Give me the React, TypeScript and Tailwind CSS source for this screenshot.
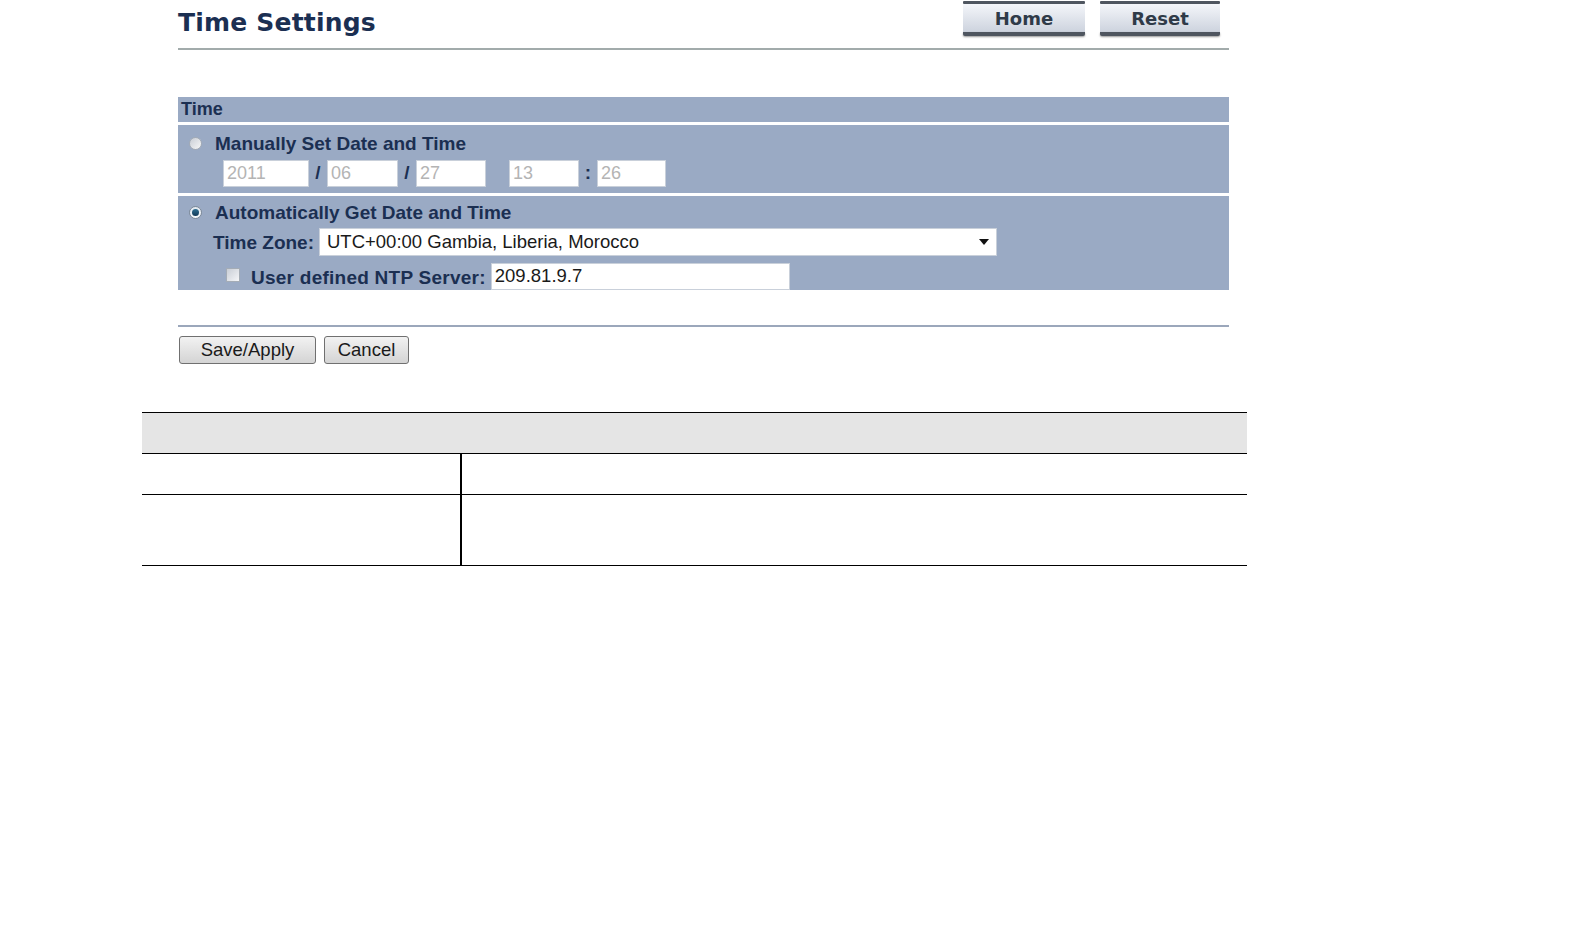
import React from "react";

const navy = "text-[#1b2f52]";

const Field: React.FC<{ value: string; className: string; disabled?: boolean }> = ({ value, className, disabled }) => (
  <div
    className={`h-[27px] bg-white border border-[#c9d0da] flex items-center px-[3px] text-[18px] font-normal leading-none ${
      disabled ? "text-[#b4b4b4]" : "text-[#1a1a1a]"
    } ${className}`}
  >
    {value}
  </div>
);

const TabButton: React.FC<{ label: string; className: string }> = ({ label, className }) => (
  <div className={`flex flex-col h-[36px] ${className}`}>
    <div className="h-[3px] mt-[1px] bg-[#4f5660] rounded-[1px]" />
    <div
      className="flex-1 bg-gradient-to-b from-[#f4f6fa] to-[#cdd3de] flex items-center justify-center text-[18px] text-[#2f3a48]"
      style={{ fontFamily: '"DejaVu Sans", Verdana, sans-serif', fontWeight: 600 }}
    >
      {label}
    </div>
    <div className="h-[4px] bg-[#4f5660] rounded-b-[2px] shadow-[0_1px_2px_rgba(0,0,0,0.4)]" />
  </div>
);

const Radio: React.FC<{ checked?: boolean }> = ({ checked }) => (
  <div
    className={`w-[13px] h-[13px] rounded-full border flex items-center justify-center ${
      checked
        ? "border-[#7d8a99] bg-gradient-to-b from-[#dfe7ef] to-[#f6f9fc]"
        : "border-[#a4acb6] bg-gradient-to-br from-[#c9ced6] to-[#f7f7f7]"
    }`}
  >
    {checked && <div className="w-[7px] h-[7px] rounded-full bg-gradient-to-b from-[#2f6f92] to-[#123a58]" />}
  </div>
);

const OldButton: React.FC<{ label: string; className: string }> = ({ label, className }) => (
  <div
    className={`h-[28px] border border-[#707070] rounded-[3px] bg-gradient-to-b from-[#f2f2f2] to-[#d4d4d4] flex items-center justify-center text-[18.5px] text-[#1a1a1a] ${className}`}
  >
    {label}
  </div>
);

export default function App() {
  return (
    <div className="w-[1584px] h-[932px] bg-white relative" style={{ fontFamily: '"Liberation Sans", Arial, sans-serif' }}>
      {/* header */}
      <div className="ml-[178px] w-[1051px] flex items-start">
        <h1
          className={`mt-[10px] text-[25px] leading-none font-bold ${navy} tracking-[0.2px]`}
          style={{ fontFamily: '"DejaVu Sans", Verdana, sans-serif' }}
        >
          Time Settings
        </h1>
        <div className="ml-auto flex gap-[15px] mr-[9px]">
          <TabButton label="Home" className="w-[122px]" />
          <TabButton label="Reset" className="w-[120px]" />
        </div>
      </div>
      <div className="ml-[178px] w-[1051px] h-[2px] bg-[#a2abab] mt-[12px]" />

      {/* time panel */}
      <div className="ml-[178px] w-[1051px] mt-[47px] flex flex-col gap-[3px]">
        <div className={`h-[25px] bg-[#9aaac4] flex items-center pl-[3px] text-[18px] font-bold ${navy}`}>Time</div>
        <div className="h-[68px] bg-[#9aaac4] flex flex-col">
          <div className="flex items-center h-[20px] mt-[8px] pl-[11px] gap-[13px]">
            <Radio />
            <span className={`text-[19px] leading-none font-bold ${navy}`}>Manually Set Date and Time</span>
          </div>
          <div className={`flex items-center mt-[6px] pl-[45px] text-[19px] font-bold ${navy}`}>
            <Field value="2011" className="w-[86px]" disabled />
            <span className="w-[18px] text-center">/</span>
            <Field value="06" className="w-[71px]" disabled />
            <span className="w-[18px] text-center">/</span>
            <Field value="27" className="w-[70px]" disabled />
            <Field value="13" className="w-[70px] ml-[23px]" disabled />
            <span className="w-[18px] text-center">:</span>
            <Field value="26" className="w-[69px]" disabled />
          </div>
        </div>
        <div className="h-[94px] bg-[#9aaac4] flex flex-col">
          <div className="flex items-center h-[20px] mt-[7px] pl-[11px] gap-[13px]">
            <Radio checked />
            <span className={`text-[19px] leading-none font-bold ${navy}`}>Automatically Get Date and Time</span>
          </div>
          <div className="flex items-center mt-[4px] pl-[35px]">
            <span className={`text-[19px] font-bold ${navy} mt-[3px]`}>Time Zone:</span>
            <div className="ml-[5px] w-[678px] h-[28px] bg-white border border-[#c9d0da] flex items-center pl-[7px] pr-[7px] text-[18.5px] text-[#1a1a1a]">
              UTC+00:00 Gambia, Liberia, Morocco
              <svg className="ml-auto" width="10" height="6" viewBox="0 0 10 6">
                <path d="M0 0 L10 0 L5 6 Z" fill="#111" />
              </svg>
            </div>
          </div>
          <div className="flex items-center mt-[3px] pl-[48px]">
            <div className="w-[14px] h-[14px] border border-[#a4acb6] bg-gradient-to-br from-[#c9ced6] to-[#f5f6f8] mt-[-2px]" />
            <span className={`ml-[11px] text-[19px] font-bold ${navy} mt-[3px] tracking-[0.25px]`}>User defined NTP Server:</span>
            <Field value="209.81.9.7" className="ml-[5px] w-[299px] !text-[18.5px]" />
          </div>
        </div>
      </div>

      <div className="ml-[178px] w-[1051px] h-[2px] bg-[#9ba7bb] mt-[35px]" />
      <div className="ml-[179px] flex gap-[8px] mt-[9px]">
        <OldButton label="Save/Apply" className="w-[137px]" />
        <OldButton label="Cancel" className="w-[85px]" />
      </div>

      {/* table */}
      <div className="ml-[142px] w-[1105px] mt-[48px] border-t border-black">
        <div className="h-[41px] bg-[#e5e5e5] border-b border-black" />
        <div className="flex h-[41px] border-b border-black">
          <div className="w-[320px] border-r-2 border-black" />
          <div className="flex-1" />
        </div>
        <div className="flex h-[71px] border-b border-black">
          <div className="w-[320px] border-r-2 border-black" />
          <div className="flex-1" />
        </div>
      </div>
    </div>
  );
}
